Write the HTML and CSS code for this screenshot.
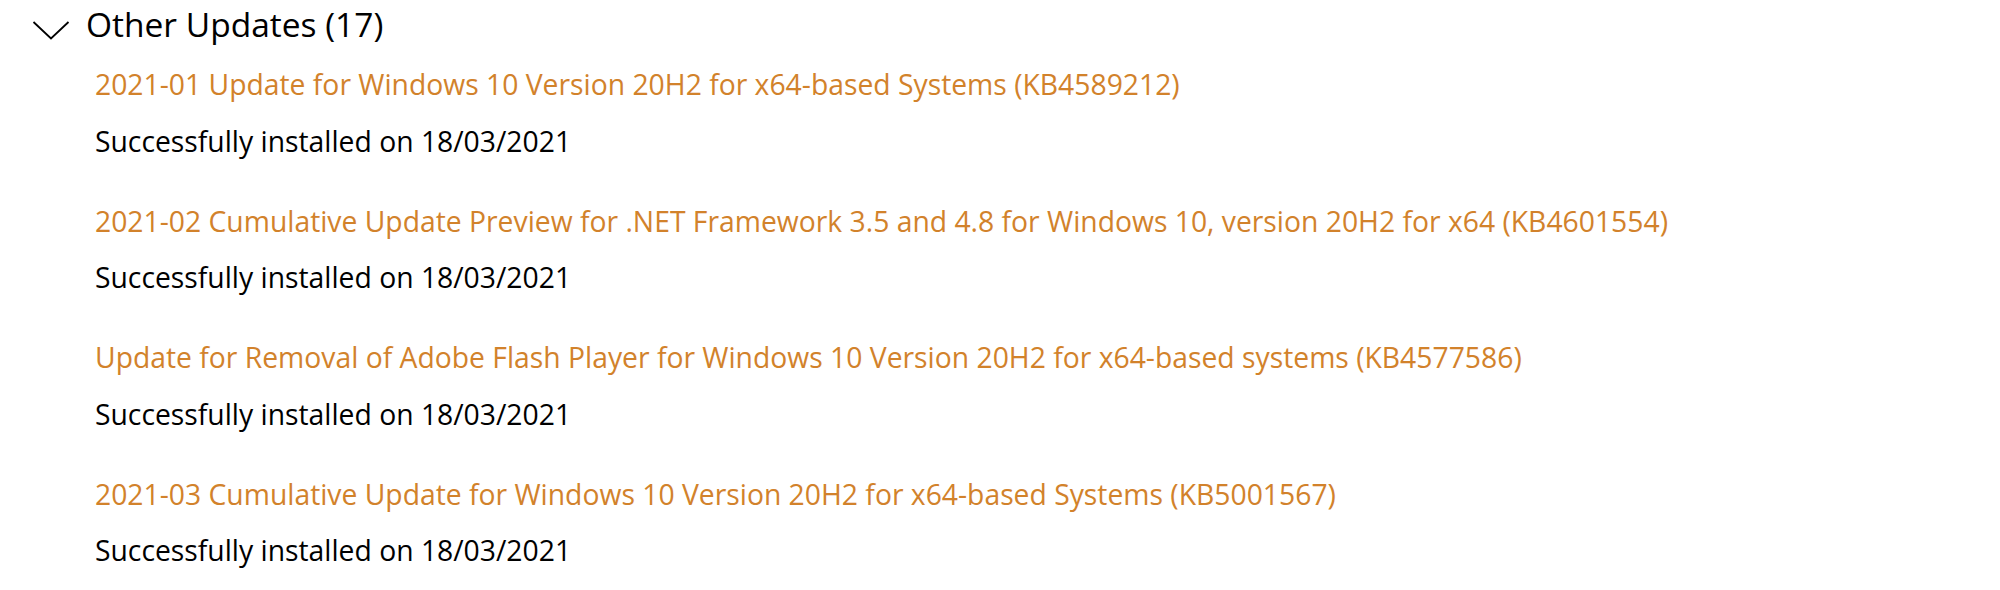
FILE: index.html
```html
<!DOCTYPE html>
<html lang="en">
<head>
<meta charset="utf-8">
<title>Update history</title>
<link rel="stylesheet" href="styles.css">
</head>
<body>
<section class="group">
  <div class="group-header">
    <svg class="chevron" width="38" height="20" viewBox="0 0 38 20" aria-hidden="true">
      <polyline points="1.5,2 19,18.5 36.5,2" fill="none" stroke="#000" stroke-width="1.8"/>
    </svg>
    <h2 class="group-title">Other Updates (17)</h2>
  </div>
  <ul class="updates">
    <li class="update">
      <a class="update-link" href="#">2021-01 Update for Windows 10 Version 20H2 for x64-based Systems (KB4589212)</a>
      <p class="update-status">Successfully installed on 18/03/2021</p>
    </li>
    <li class="update">
      <a class="update-link" href="#">2021-02 Cumulative Update Preview for .NET Framework 3.5 and 4.8 for Windows 10, version 20H2 for x64 (KB4601554)</a>
      <p class="update-status">Successfully installed on 18/03/2021</p>
    </li>
    <li class="update">
      <a class="update-link" href="#">Update for Removal of Adobe Flash Player for Windows 10 Version 20H2 for x64-based systems (KB4577586)</a>
      <p class="update-status">Successfully installed on 18/03/2021</p>
    </li>
    <li class="update">
      <a class="update-link" href="#">2021-03 Cumulative Update for Windows 10 Version 20H2 for x64-based Systems (KB5001567)</a>
      <p class="update-status">Successfully installed on 18/03/2021</p>
    </li>
  </ul>
</section>
</body>
</html>
```

FILE: styles.css
```css
html, body {
  margin: 0;
  padding: 0;
  background: #ffffff;
}

body {
  font-family: "Open Sans", "Noto Sans", "Liberation Sans", sans-serif;
  color: #000000;
}

.group {
  padding-top: 4px;
}

.group-header {
  display: flex;
  align-items: flex-start;
  height: 40px;
  padding-left: 32px;
}

.chevron {
  display: block;
  flex: none;
  margin-top: 16px;
  margin-right: 16px;
}

.group-title {
  margin: 0;
  font-size: 33.5px;
  font-weight: 400;
  line-height: 40px;
}

.updates {
  list-style: none;
  margin: 22px 0 0 0;
  padding: 0 0 0 95px;
  display: flex;
  flex-direction: column;
  gap: 44px;
}

.update {
  display: flex;
  flex-direction: column;
  align-items: flex-start;
  gap: 20.5px;
}

.update-link,
.update-status {
  font-size: 28.3px;
  line-height: 36px;
}

.update-link {
  color: #d2822b;
  text-decoration: none;
}

.update-status {
  margin: 0;
  color: #000000;
}
```
